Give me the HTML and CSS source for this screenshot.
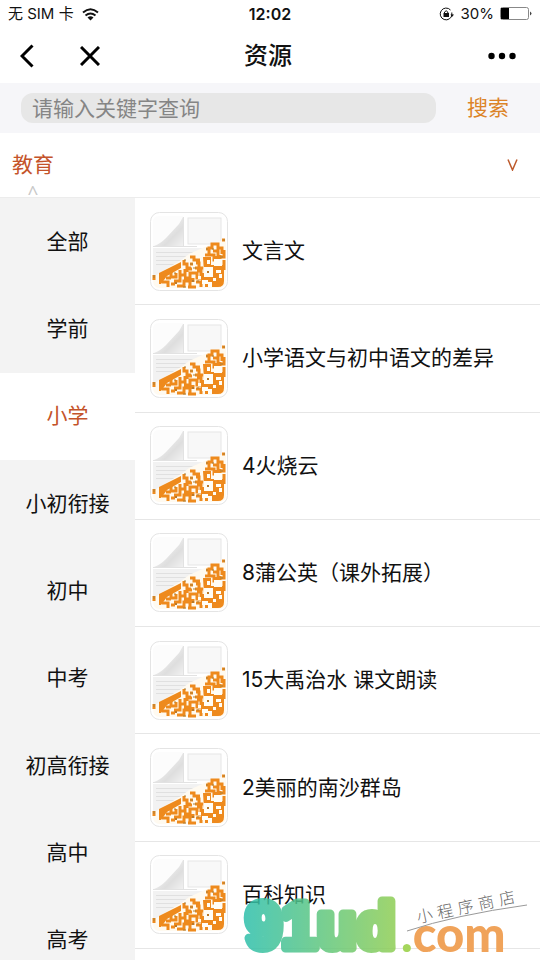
FILE: index.html
```html
<!DOCTYPE html>
<html lang="zh-CN">
<head>
    <meta charset="UTF-8">
    <meta name="viewport" content="width=device-width, initial-scale=1.0">
    <title>资源</title>
    <link rel="stylesheet" href="styles.css">
</head>
<body>
    <!-- Shared document icon -->
    <svg class="sprite" aria-hidden="true">
        <defs>
            <linearGradient id="fold" gradientUnits="userSpaceOnUse" x1="4" y1="5" x2="34" y2="35">
                <stop offset="0.45" stop-color="#e9e9e9"/>
                <stop offset="0.65" stop-color="#dedede"/>
                <stop offset="1" stop-color="#f3f3f3"/>
            </linearGradient>
        </defs>
        <symbol id="doc" viewBox="0 0 78 79">
            <rect x="0.5" y="0.5" width="77" height="78" rx="9" fill="#fff" stroke="#e4e4e4"/>
            <path d="M3 34V10q0-6 6-6h24v30z" fill="#fcfcfc"/>
            <path d="M33 5v29H4q6-2 12-8L29 12z" fill="url(#fold)"/>
            <path d="M3 36h72v-8L33 50 8 63 3 68z" fill="#f2f2f2"/>
            <path d="M3 34.500h44M33.500 5v29" stroke="#e2e2e2" fill="none"/>
            <rect x="38" y="6" width="33" height="26" fill="#f8f8f8" stroke="#e6e6e6"/>
            <path d="M6 40.500h45M6 44.500h39M6 48.500h26M6 52.500h18" stroke="#e0e0e0" fill="none"/>
            <path d="M76 27v41q0 8-8 8H10q-7 0-7-8v-3l28-17 8-6 18-8z" fill="#fffaf0"/>
            <path d="M9 61L31 50v6L17 64l-6 8H9z" fill="#ee8a1d"/>
            <path d="M53 45h8v8h13v16q0 6-6 6H55v-6h-4v-8h3z" fill="#ee8a1d"/>
            <path stroke="#ee8a1d" stroke-width="3" fill="none" d="M72 28h3M59 42v-6h3v-4h6v4h4v6M56 37h3M63 39h5v6h6v-7M55 43h9v5h6v-5M74 48v10M66 44v8M40 45h4v3h6M34 48v4h3v5h5M40 52h3M46 51h3v5M4 63v5M21 60v5h5v-4M16 66h5M12 70h6v5M24 69h6v-6h5v-6M30 58v5M34 66h6v-5h7v5h4v-7h-4M45 56h8M41 56h-4v4M27 74h7v-5h6v6h6M43 70v-4M46 70h5v5M21 72h4M38 75h5M49 54v6"/>
            <path stroke="#a9803c" stroke-width="1" fill="none" d="M56 37h2M73 28h2M34 48h2M40 52h3M4 63v3M43 56h3M62 37h2M24 61h2M47 69h2M33 75h3M70 45h3"/>
            <path fill="#fffdf6" d="M54 55h9v10h-9zM64 47h8v7h-8zM66 58h5v3h-5zM52 68h6v2h4v5h-4v-3h-6zM63 66h3v3h-3zM57 48h3v4h-3zM69 62h3v4h-3zM48 64h3v3h-3z"/>
            <path fill="#b8792a" d="M57 59h2v2h-2zM42 68h2v2h-2zM25 70h2v2h-2z"/>
        </symbol>
    </svg>

    <div class="status-bar">
        <div class="carrier">
            <span>无 SIM 卡</span>
            <svg width="17" height="13" viewBox="0 0 17 13" fill="none" stroke="#111" stroke-width="2">
                <path d="M1 4.500Q8.500-2 16 4.500M3.500 7.500q5-4 10 0"/>
                <path d="M5.500 9.500q3-2.500 6 0l-3 3z" fill="#111" stroke="none"/>
            </svg>
        </div>
        <strong class="clock">12:02</strong>
        <div class="battery">
            <svg width="16" height="14" viewBox="0 0 16 14" fill="none" stroke="#111">
                <path d="M13 7.500A5.900 5.900 0 1 1 11.500 3M12.800 5.500v3.500"/>
                <path d="M11.500 7.500h3.500l-2 2.500z" fill="#111" stroke="none"/>
                <path d="M5.500 6V5q1.700-2.500 3.300 0v1"/>
                <rect x="4.500" y="6" width="5.500" height="4" fill="#111" stroke="none"/>
            </svg>
            <span>30%</span>
            <svg width="32" height="14" viewBox="0 0 32 14">
                <rect x="0.500" y="0.500" width="28" height="12" rx="2" fill="#fff" stroke="#888"/>
                <path d="M1 1h8v11H1z" fill="#000"/>
                <path d="M30 4.500q3 2 0 4z" fill="#444"/>
            </svg>
        </div>
    </div>

    <header class="nav">
        <div class="nav-left">
            <button class="icon-btn" aria-label="返回">
                <svg width="14" height="24" viewBox="0 0 14 24" fill="none" stroke="#000" stroke-width="3">
                    <path d="M12.500 1.500L2 12l10.500 10.500"/>
                </svg>
            </button>
            <button class="icon-btn" aria-label="关闭">
                <svg width="20" height="20" viewBox="0 0 20 20" fill="none" stroke="#000" stroke-width="3">
                    <path d="M1 1l18 18M19 1L1 19"/>
                </svg>
            </button>
        </div>
        <h1>资源</h1>
        <button class="icon-btn more" aria-label="更多">
            <svg width="28" height="8" viewBox="0 0 28 8">
                <circle cx="3.500" cy="4" r="3.200"/>
                <circle cx="14" cy="4" r="3.200"/>
                <circle cx="24.500" cy="4" r="3.200"/>
            </svg>
        </button>
    </header>

    <form class="search">
        <input type="text" class="search-input" placeholder="请输入关键字查询" aria-label="请输入关键字查询">
        <button type="button" class="search-btn">搜索</button>
    </form>

    <div class="tabs">
        <a href="#" class="tab">教育<span class="tab-mark">^</span></a>
        <button class="expand" aria-label="展开">
            <svg width="11" height="12" viewBox="0 0 11 12" fill="none" stroke="#bd5a2c" stroke-width="1.500">
                <path d="M1 0.500l4.500 10.500L10 0.500"/>
            </svg>
        </button>
    </div>

    <main class="panel">
        <nav class="sidebar">
            <a href="#">全部</a>
            <a href="#">学前</a>
            <a href="#" class="active">小学</a>
            <a href="#">小初衔接</a>
            <a href="#">初中</a>
            <a href="#">中考</a>
            <a href="#">初高衔接</a>
            <a href="#">高中</a>
            <a href="#">高考</a>
        </nav>
        <div class="list">
            <a href="#" class="row"><svg class="thumb"><use href="#doc"/></svg>文言文</a>
            <a href="#" class="row"><svg class="thumb"><use href="#doc"/></svg>小学语文与初中语文的差异</a>
            <a href="#" class="row"><svg class="thumb"><use href="#doc"/></svg>4火烧云</a>
            <a href="#" class="row"><svg class="thumb"><use href="#doc"/></svg>8蒲公英（课外拓展）</a>
            <a href="#" class="row"><svg class="thumb"><use href="#doc"/></svg>15大禹治水 课文朗读</a>
            <a href="#" class="row"><svg class="thumb"><use href="#doc"/></svg>2美丽的南沙群岛</a>
            <a href="#" class="row"><svg class="thumb"><use href="#doc"/></svg>百科知识</a>
        </div>
    </main>

    <!-- Watermark -->
    <svg class="watermark" width="300" height="90" viewBox="0 0 300 90">
        <defs>
            <linearGradient id="brand" gradientUnits="userSpaceOnUse" x1="0" y1="0" x2="155" y2="0">
                <stop offset="0" stop-color="#2cbfae"/>
                <stop offset="1" stop-color="#8fce55"/>
            </linearGradient>
        </defs>
        <text class="wm-brand" x="6" y="78">91ud</text>
        <text class="wm-com" x="161" y="82"><tspan class="wm-dot">.</tspan>com</text>
        <path d="M167 61Q215 45 287 35" fill="none" stroke="#999"/>
        <text class="wm-store" transform="rotate(-12 178 53)" x="178 199 220 241 262" y="53">小程序商店</text>
    </svg>
</body>
</html>
```

FILE: styles.css
```css
* {
    margin: 0;
    padding: 0;
    box-sizing: border-box;
}

body {
    display: flex;
    flex-direction: column;
    height: 100vh;
    overflow: hidden;
    position: relative;
    background: #fff;
    color: #111;
    font-family: Inter, "Noto Sans CJK SC", sans-serif;
    font-size: 21px;
    line-height: 28px;
}

a {
    color: inherit;
    text-decoration: none;
}

button {
    border: none;
    background: none;
    font: inherit;
    cursor: pointer;
}

svg {
    display: block;
    flex-shrink: 0;
}

.sprite {
    position: absolute;
    width: 0;
    height: 0;
}

/* Status bar */
.status-bar {
    display: grid;
    grid-template-columns: 1fr auto 1fr;
    align-items: center;
    height: 28px;
    padding: 0 8px;
    font-size: 15px;
}

.carrier,
.battery {
    display: flex;
    align-items: center;
    gap: 8px;
}

.battery {
    justify-content: flex-end;
    gap: 6px;
}

.clock {
    font-size: 16px;
    font-weight: 600;
}

/* Title bar */
.nav {
    display: grid;
    grid-template-columns: 1fr auto 1fr;
    align-items: center;
    height: 55px;
    padding: 0 24px 0 20px;
}

.nav-left {
    display: flex;
    align-items: center;
    gap: 46px;
}

.nav h1 {
    font-size: 24px;
    font-weight: 500;
}

.more {
    justify-self: end;
}

/* Search */
.search {
    display: flex;
    align-items: center;
    height: 50px;
    padding-left: 21px;
    background: #f6f6f9;
}

.search-input {
    flex: 1;
    min-width: 0;
    height: 30px;
    padding: 0 11px;
    border: none;
    border-radius: 12px;
    background: #e7e7e7;
    font: inherit;
    outline: none;
}

.search-input::placeholder {
    color: #858585;
}

.search-btn {
    width: 104px;
    color: #dc8428;
}

/* Category tab */
.tabs {
    display: flex;
    align-items: center;
    justify-content: space-between;
    height: 65px;
    padding: 0 22px 0 12px;
    border-bottom: 1px solid #ececec;
}

.tab {
    position: relative;
    color: #c4532a;
}

.tab-mark {
    position: absolute;
    top: 100%;
    left: 0;
    width: 100%;
    font-family: "Noto Sans", sans-serif;
    font-size: 19px;
    text-align: center;
    color: #c8c8c8;
}

/* Content */
.panel {
    display: flex;
    flex: 1;
    min-height: 0;
    overflow: hidden;
}

.sidebar {
    display: flex;
    flex-direction: column;
    width: 25%;
    margin-bottom: -24px;
    background: #f3f3f3;
}

.sidebar a {
    display: flex;
    flex: 1;
    align-items: center;
    justify-content: center;
}

.sidebar .active {
    background: #fff;
    color: #c4532a;
}

.list {
    display: flex;
    flex: 1;
    flex-direction: column;
    padding-bottom: 11px;
}

.row {
    display: flex;
    flex: 1;
    align-items: center;
    gap: 14px;
    padding-left: 15px;
    border-bottom: 1px solid #e6e6e6;
}

.thumb {
    width: 78px;
    height: 79px;
}

/* Watermark */
.watermark {
    position: absolute;
    right: 0;
    bottom: 0;
    pointer-events: none;
}

.wm-brand {
    font: bold 64px "Liberation Sans", sans-serif;
    fill: url(#brand);
    stroke: url(#brand);
    stroke-width: 9;
    stroke-linejoin: round;
    opacity: 0.85;
}

.wm-com {
    font: 900 49px Lato, sans-serif;
    fill: #f0a35a;
}

.wm-dot {
    fill: #a5d65c;
}

.wm-store {
    font: 300 16px "Noto Sans CJK SC", sans-serif;
    fill: #666;
}
```
